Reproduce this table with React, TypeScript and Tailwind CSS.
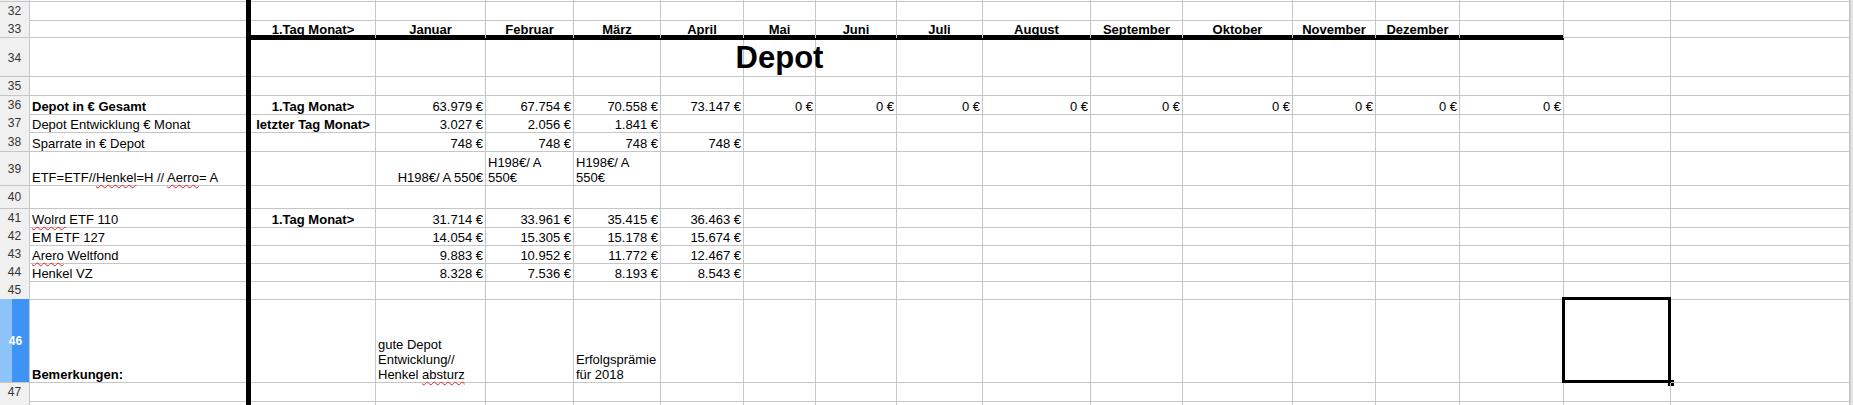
import React from "react";

const COLS =
  "grid grid-cols-[30px_216px_5px_125px_110px_88px_87px_83px_72px_81px_86px_108px_92px_110px_83px_84px_104px_107px_179px_3px]";

const KEYS = ["A", "T", "B", "C", "D", "E", "F", "G", "H", "I", "J", "K", "L", "M", "N", "O", "P", "Q"];
const THICK_H = ["B", "C", "D", "E", "F", "G", "H", "I", "J", "K", "L", "M", "N", "O"];

type Align = "l" | "r" | "c";
type CellDef = { t: React.ReactNode; a?: Align; b?: boolean; big?: boolean };
type RowDef = { n?: number; h: string; cells?: Record<string, CellDef>; noBottom?: boolean; sel?: boolean; hideNum?: boolean };

const Sq = ({ children }: { children: React.ReactNode }) => (
  <span className="underline decoration-wavy decoration-[#e0242a] decoration-[1px] underline-offset-[2px]">
    {children}
  </span>
);

const months = ["Januar", "Februar", "März", "April", "Mai", "Juni", "Juli", "August", "September", "Oktober", "November", "Dezember"];
const monthCols = ["C", "D", "E", "F", "G", "H", "I", "J", "K", "L", "M", "N"];

const row33: Record<string, CellDef> = { B: { t: "1.Tag Monat>", a: "c", b: true } };
monthCols.forEach((c, i) => (row33[c] = { t: months[i], a: "c", b: true }));

const row36: Record<string, CellDef> = {
  A: { t: "Depot in € Gesamt", b: true },
  B: { t: "1.Tag Monat>", a: "c", b: true },
  C: { t: "63.979 €", a: "r" },
  D: { t: "67.754 €", a: "r" },
  E: { t: "70.558 €", a: "r" },
  F: { t: "73.147 €", a: "r" },
};
["G", "H", "I", "J", "K", "L", "M", "N", "O"].forEach((c) => (row36[c] = { t: "0 €", a: "r" }));

const lines = (arr: React.ReactNode[]) => (
  <div className="flex flex-col">
    {arr.map((l, i) => (
      <div key={i}>{l}</div>
    ))}
  </div>
);

const ROWS: RowDef[] = [
  { h: "h-[2px]" },
  { n: 32, h: "h-[18px]" },
  { n: 33, h: "h-[15px]", noBottom: true, cells: row33 },
  { n: -1, h: "h-[5px]" },
  { n: 34, h: "h-[37px]", cells: { G: { t: "Depot", a: "c", b: true, big: true } } },
  { n: 35, h: "h-[19px]" },
  { n: 36, h: "h-[18px]", cells: row36 },
  {
    n: 37,
    h: "h-[18px]",
    cells: {
      A: { t: "Depot Entwicklung € Monat" },
      B: { t: "letzter Tag Monat>", a: "c", b: true },
      C: { t: "3.027 €", a: "r" },
      D: { t: "2.056 €", a: "r" },
      E: { t: "1.841 €", a: "r" },
    },
  },
  {
    n: 38,
    h: "h-[20px]",
    cells: {
      A: { t: "Sparrate in € Depot" },
      C: { t: "748 €", a: "r" },
      D: { t: "748 €", a: "r" },
      E: { t: "748 €", a: "r" },
      F: { t: "748 €", a: "r" },
    },
  },
  {
    n: 39,
    h: "h-[34px]",
    cells: {
      A: {
        t: (
          <span>
            ETF=ETF//<Sq>Henkel</Sq>=H // <Sq>Aerro</Sq>= A
          </span>
        ),
      },
      C: { t: "H198€/ A 550€", a: "r" },
      D: { t: lines(["H198€/ A", "550€"]) },
      E: { t: lines(["H198€/ A", "550€"]) },
    },
  },
  { n: 40, h: "h-[23px]" },
  {
    n: 41,
    h: "h-[18px]",
    cells: {
      A: {
        t: (
          <span>
            <Sq>Wolrd</Sq> ETF 110
          </span>
        ),
      },
      B: { t: "1.Tag Monat>", a: "c", b: true },
      C: { t: "31.714 €", a: "r" },
      D: { t: "33.961 €", a: "r" },
      E: { t: "35.415 €", a: "r" },
      F: { t: "36.463 €", a: "r" },
    },
  },
  {
    n: 42,
    h: "h-[18px]",
    cells: {
      A: { t: "EM ETF 127" },
      C: { t: "14.054 €", a: "r" },
      D: { t: "15.305 €", a: "r" },
      E: { t: "15.178 €", a: "r" },
      F: { t: "15.674 €", a: "r" },
    },
  },
  {
    n: 43,
    h: "h-[18px]",
    cells: {
      A: {
        t: (
          <span>
            <Sq>Arero</Sq> Weltfond
          </span>
        ),
      },
      C: { t: "9.883 €", a: "r" },
      D: { t: "10.952 €", a: "r" },
      E: { t: "11.772 €", a: "r" },
      F: { t: "12.467 €", a: "r" },
    },
  },
  {
    n: 44,
    h: "h-[18px]",
    cells: {
      A: { t: "Henkel VZ" },
      C: { t: "8.328 €", a: "r" },
      D: { t: "7.536 €", a: "r" },
      E: { t: "8.193 €", a: "r" },
      F: { t: "8.543 €", a: "r" },
    },
  },
  { n: 45, h: "h-[18px]" },
  {
    n: 46,
    h: "h-[84px]",
    sel: true,
    cells: {
      A: { t: "Bemerkungen:", b: true },
      C: {
        t: lines([
          "gute Depot",
          "Entwicklung//",
          <span key="h">
            Henkel <Sq>absturz</Sq>
          </span>,
        ]),
      },
      E: { t: lines(["Erfolgsprämie", "für 2018"]) },
    },
  },
  { n: 47, h: "h-[18px]" },
  { n: 48, h: "h-[18px]", hideNum: true },
];

const G = "border-[#c6c6c6]";

function HeaderCell({ row }: { row: RowDef }) {
  if (row.n === -1) {
    return (
      <div className={`bg-[#f0f0f0] border-r ${G}`}>
        <div className={`mt-[2px] border-t ${G}`} />
      </div>
    );
  }
  if (row.sel) {
    return (
      <div
        className={`flex items-center justify-center border-r border-b ${G} bg-[linear-gradient(to_right,#8cc3f8_0px,#8cc3f8_12px,#3f93f4_12px,#3f93f4_100%)] text-white font-bold text-[12px]`}
      >
        <span className="pl-[2px]">{row.n}</span>
      </div>
    );
  }
  return (
    <div
      className={`flex items-center justify-center bg-[#f0f0f0] border-r ${row.noBottom ? "" : "border-b"} ${G} text-[12px] text-[#333]`}
    >
      {row.n && !row.hideNum ? row.n : null}
    </div>
  );
}

function DataCell({ row, k }: { row: RowDef; k: string }) {
  const isThin = row.n === -1;
  if (k === "T") return <div className="bg-black" />;
  if (isThin) {
    if (THICK_H.includes(k)) return <div className="bg-black" />;
    return (
      <div className={`${k === "A" ? "" : "border-r"} ${G}`}>
        <div className={`mt-[2px] border-t ${G}`} />
      </div>
    );
  }
  const c = row.cells?.[k];
  const br = k === "A" ? "" : "border-r";
  const bb = row.noBottom ? "" : "border-b";
  const pb = row.noBottom ? "pb-[1px]" : "";
  const just = c?.a === "r" ? "justify-end" : c?.a === "c" ? "justify-center" : "justify-start";
  const sel = row.sel && k === "P";
  return (
    <div
      className={`relative flex items-end ${just} ${br} ${bb} ${pb} ${G} px-[2px] whitespace-nowrap ${
        c?.big ? "text-[31px] leading-[34px] pb-[1px]" : "text-[13px] leading-[15px]"
      } ${c?.b ? "font-bold" : ""}`}
    >
      {c ? c.t : null}
      {sel ? (
        <>
          <div className="absolute -left-[2px] -top-[2px] -right-[1px] -bottom-[1px] border-[3px] border-black" />
          <div className="absolute -right-[4px] -bottom-[4px] w-[6px] h-[6px] bg-black" />
        </>
      ) : null}
    </div>
  );
}

export default function App() {
  return (
    <div
      className="w-[1853px] h-[405px] overflow-hidden bg-white text-black"
      style={{ fontFamily: '"Liberation Sans", Arial, sans-serif' }}
    >
      {ROWS.map((row, i) => (
        <div key={i} className={`${COLS} ${row.h}`}>
          <HeaderCell row={row} />
          {KEYS.map((k) => (
            <DataCell key={k} row={row} k={k} />
          ))}
          <div className="bg-[#e6e6e6] border-l border-[#d0d0d0]" />
        </div>
      ))}
    </div>
  );
}
